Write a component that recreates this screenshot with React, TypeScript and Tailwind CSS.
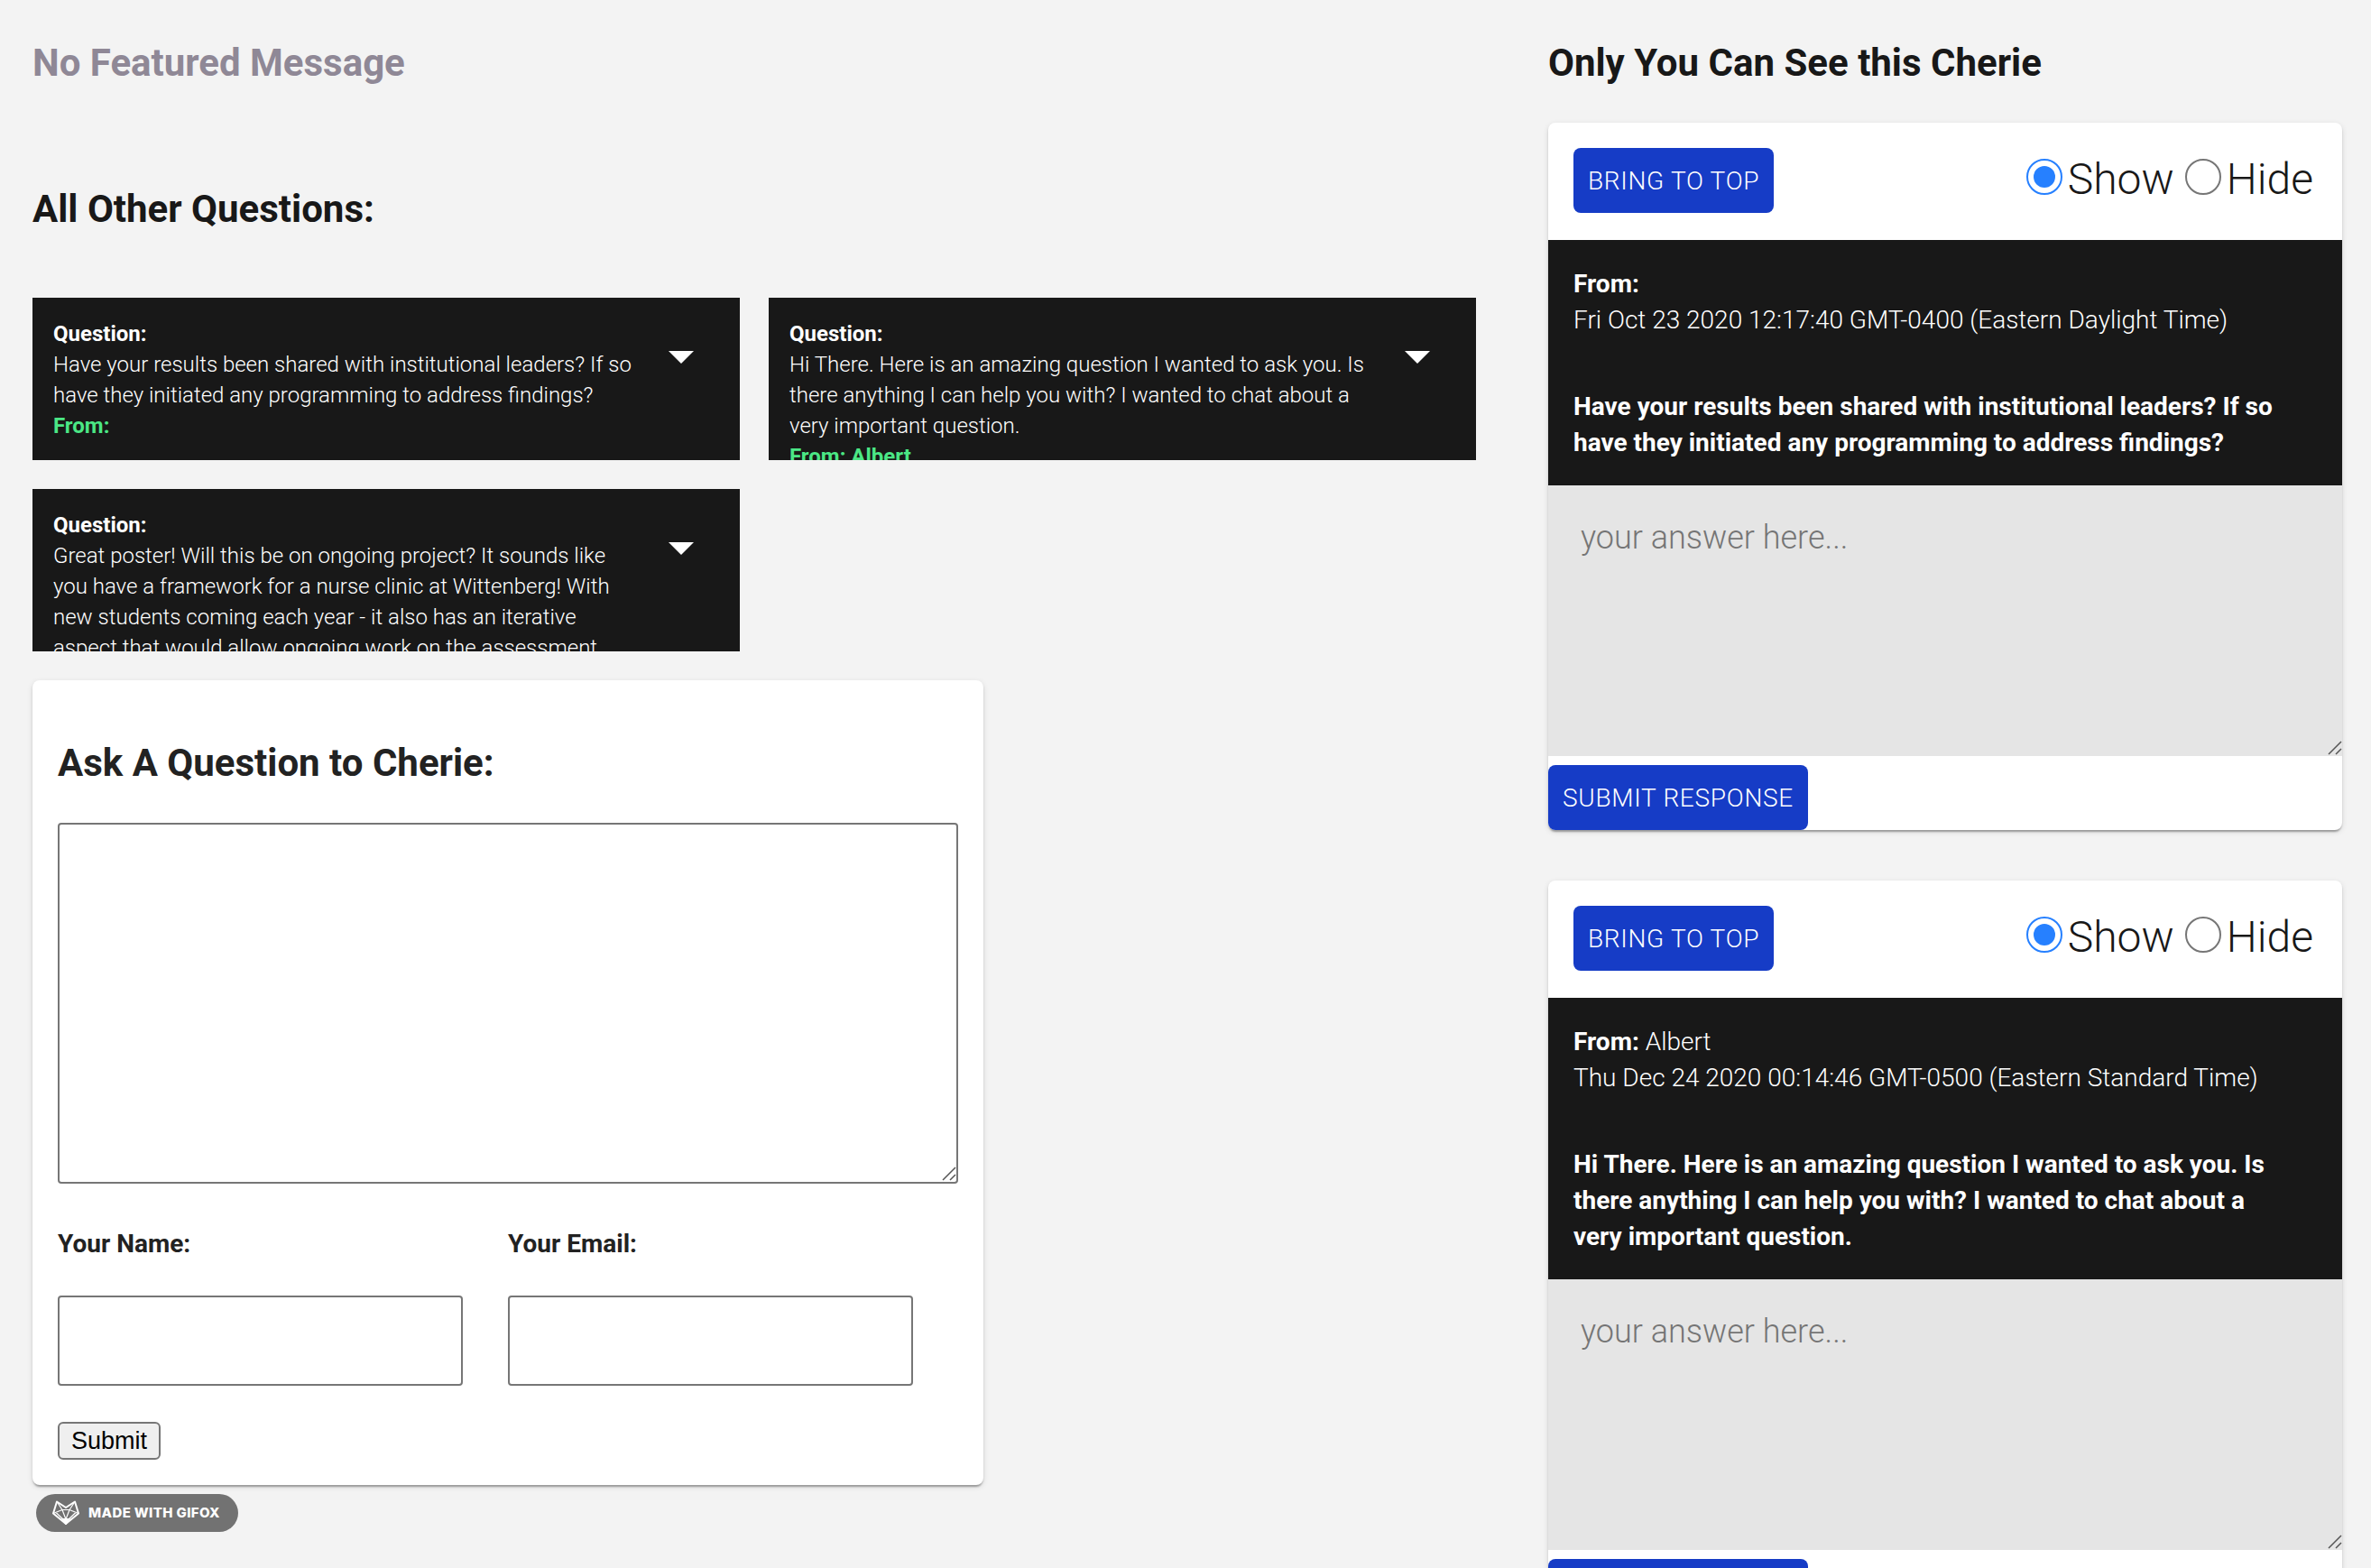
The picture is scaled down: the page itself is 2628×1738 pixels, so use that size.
import { useId, useState } from "react";

function ResizeGrip({ className }: { className: string }) {
  return (
    <svg
      className={"pointer-events-none absolute h-4 w-4 " + className}
      viewBox="0 0 16 16"
      fill="none"
      stroke="#555"
      strokeWidth="1.5"
      aria-hidden="true"
    >
      <path d="M1 15 15 1M9 15 15 9" />
    </svg>
  );
}

function QuestionCard({ text, from }: { text: string; from: string }) {
  return (
    <article className="flex h-[180px] items-start overflow-hidden bg-[#181818] pl-[23px] pr-[51px] pt-[23px] text-2xl leading-[34px] text-white">
      <div className="min-w-0 flex-1">
        <p className="font-bold">Question:</p>
        <p className="font-light">{text}</p>
        <p className="font-bold text-[#4be785]">From: {from}</p>
      </div>
      <button type="button" aria-label="Expand question" className="ml-8 mt-9 flex-none">
        <svg className="h-[14px] w-7" viewBox="0 0 28 14" fill="#fff" aria-hidden="true">
          <path d="M0 0h28L14 14z" />
        </svg>
      </button>
    </article>
  );
}

function VisibilityChoice() {
  const name = useId();
  const [value, setValue] = useState("Show");
  return (
    <div className="flex items-start gap-3 text-5xl leading-[70px] font-light text-[#181818]">
      {["Show", "Hide"].map((option) => (
        <label key={option} className="flex items-start gap-[6px]">
          <input
            type="radio"
            name={name}
            checked={value === option}
            onChange={() => setValue(option)}
            className="mt-3 h-10 w-10 appearance-none rounded-full border-2 border-[#767676] bg-white bg-clip-content p-[6px] checked:border-[#2680ff] checked:bg-[#2680ff]"
          />
          {option}
        </label>
      ))}
    </div>
  );
}

const blueButton =
  "h-[72px] rounded-lg bg-[#163cc6] px-4 pt-[2px] text-[28px] font-light uppercase tracking-wide text-white";

function ResponseCard({ from, date, text }: { from: string; date: string; text: string }) {
  return (
    <article className="rounded-lg bg-white shadow-[0_4px_2px_-2px_rgba(0,0,0,0.2),0_2px_2px_rgba(0,0,0,0.14),0_2px_6px_rgba(0,0,0,0.12)]">
      <div className="flex h-[130px] items-start justify-between pl-7 pr-8 pt-7">
        <button type="button" className={blueButton}>
          Bring to top
        </button>
        <VisibilityChoice />
      </div>
      <div className="bg-[#181818] pb-[27px] pl-7 pr-16 pt-[29px] text-[28px] leading-10 text-white">
        <p className="font-light">
          <strong className="font-bold">From:</strong> {from}
        </p>
        <p className="font-light">{date}</p>
        <p className="mt-14 font-bold">{text}</p>
      </div>
      <div className="relative h-[300px]">
        <textarea
          aria-label="Your answer"
          placeholder="your answer here..."
          className="block h-full w-full resize-none bg-[#e5e5e5] px-9 py-9 text-4xl leading-[44px] font-light placeholder:text-[#757575]"
        />
        <ResizeGrip className="bottom-px right-0" />
      </div>
      <button type="button" className={blueButton + " mt-[10px] block"}>
        Submit response
      </button>
    </article>
  );
}

function TextField({ label, type }: { label: string; type: string }) {
  const id = useId();
  return (
    <div className="w-[45%]">
      <label htmlFor={id} className="block text-[28px] leading-10 font-bold">
        {label}
      </label>
      <input id={id} type={type} className="mt-[37px] block h-[100px] w-full rounded border-2 border-[#767676] px-3 text-[28px]" />
    </div>
  );
}

function GifoxBadge() {
  return (
    <div className="ml-1 mt-[10px] flex h-[42px] w-56 items-center gap-[10px] self-start rounded-full bg-[#727272] pl-[18px] text-white">
      <svg className="h-7 w-[30px] flex-none" viewBox="0 0 30 28" fill="none" stroke="#fff" strokeLinejoin="round" aria-hidden="true">
        <path d="M5 1.500 15 8 25 1.500 29 14.500 15 26 1 14.500z" strokeWidth="2" />
        <path d="M5 1.500 11 10.500 1 14.500M25 1.500 19 10.500 29 14.500M11 10.500h8M4 13.500 12 21M26 13.500 18 21M11 10.500 15 21 19 10.500" strokeWidth="1.200" />
        <path d="M10.500 20.500h9L15 27z" fill="#fff" />
      </svg>
      <span className="whitespace-nowrap font-['Inter',sans-serif] text-[15px] font-extrabold tracking-wide">MADE WITH GIFOX</span>
    </div>
  );
}

export default function App() {
  const questionId = useId();
  return (
    <div className="flex h-screen justify-between gap-20 overflow-hidden bg-[#f3f3f3] pl-9 pr-8 pt-10 font-[Roboto,sans-serif] text-[#181818]">
      <main className="flex w-[1600px] flex-col">
        <h1 className="text-[42px] leading-[60px] font-bold text-[#8f8896]">No Featured Message</h1>
        <h2 className="mt-[102px] text-[42px] leading-[60px] font-bold">All Other Questions:</h2>
        <section className="mt-[68px] grid grid-cols-2 gap-8">
          <QuestionCard
            text="Have your results been shared with institutional leaders? If so have they initiated any programming to address findings?"
            from=""
          />
          <QuestionCard
            text="Hi There. Here is an amazing question I wanted to ask you. Is there anything I can help you with? I wanted to chat about a very important question."
            from="Albert"
          />
          <QuestionCard
            text="Great poster! Will this be on ongoing project? It sounds like you have a framework for a nurse clinic at Wittenberg! With new students coming each year - it also has an iterative aspect that would allow ongoing work on the assessment"
            from=""
          />
        </section>
        <form
          onSubmit={(event) => event.preventDefault()}
          className="mt-8 w-full max-w-[1054px] rounded-lg bg-white p-7 text-[#222] shadow-[0_4px_2px_-2px_rgba(0,0,0,0.2),0_2px_2px_rgba(0,0,0,0.14),0_2px_6px_rgba(0,0,0,0.12)]"
        >
          <label htmlFor={questionId} className="mt-[34px] block text-[42px] leading-[60px] font-bold">
            Ask A Question to Cherie:
          </label>
          <div className="relative mt-9 h-[400px]">
            <textarea id={questionId} className="block h-full w-full resize-none rounded border-2 border-[#767676] p-3 text-[28px]" />
            <ResizeGrip className="bottom-[3px] right-[2px]" />
          </div>
          <div className="mt-[47px] flex gap-[50px]">
            <TextField label="Your Name:" type="text" />
            <TextField label="Your Email:" type="email" />
          </div>
          <button
            type="submit"
            className="mt-10 block h-[42px] rounded-md border-2 border-[#767676] bg-[#efefef] px-[13px] font-['Liberation_Sans',sans-serif] text-[27px] leading-[38px] text-black"
          >
            Submit
          </button>
        </form>
        <GifoxBadge />
      </main>
      <aside className="w-[880px]">
        <h2 className="text-[42px] leading-[60px] font-bold">Only You Can See this Cherie</h2>
        <div className="mt-9 flex flex-col gap-14">
          <ResponseCard
            from=""
            date="Fri Oct 23 2020 12:17:40 GMT-0400 (Eastern Daylight Time)"
            text="Have your results been shared with institutional leaders? If so have they initiated any programming to address findings?"
          />
          <ResponseCard
            from="Albert"
            date="Thu Dec 24 2020 00:14:46 GMT-0500 (Eastern Standard Time)"
            text="Hi There. Here is an amazing question I wanted to ask you. Is there anything I can help you with? I wanted to chat about a very important question."
          />
        </div>
      </aside>
    </div>
  );
}
